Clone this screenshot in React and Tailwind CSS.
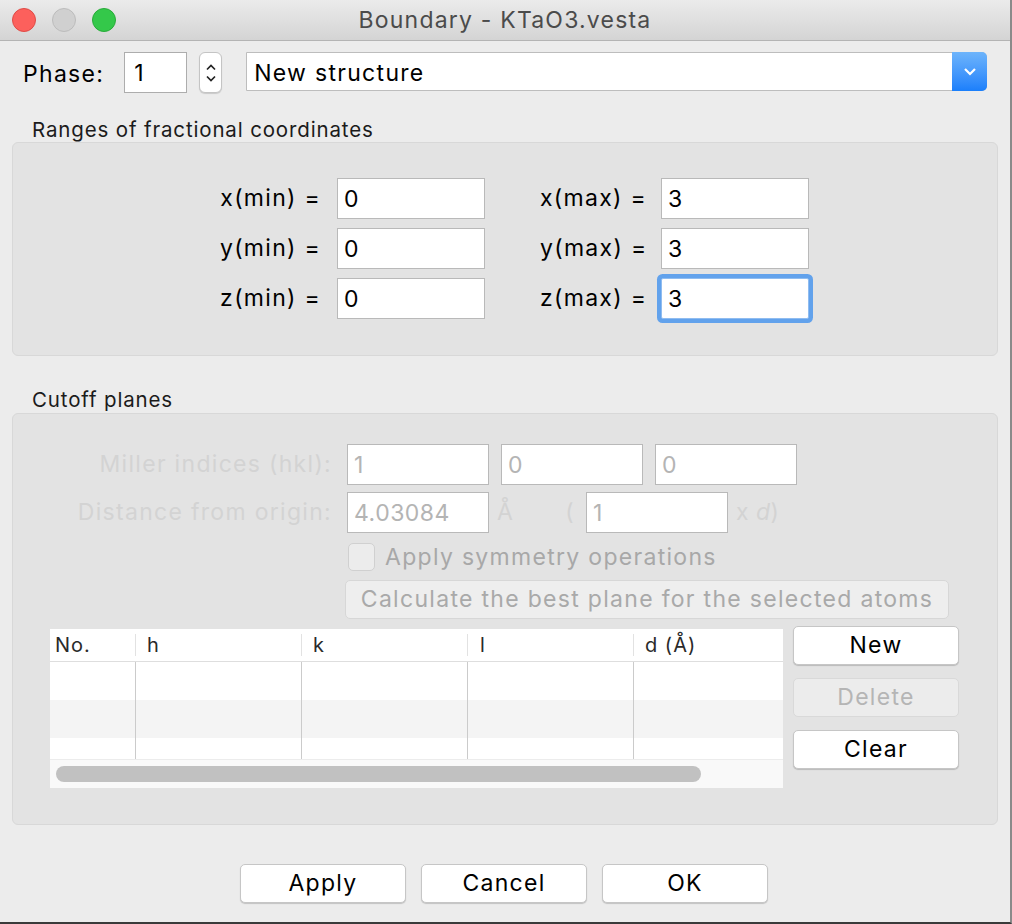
import React from 'react';

const font = { fontFamily: 'Inter, "Liberation Sans", sans-serif' };

function TextBox({ value, w = 'w-[148px]', focused = false, disabled = false }) {
  return (
    <div
      className={`${w} h-[41px] bg-white border ${
        focused ? 'border-[#8fbcf0] shadow-[0_0_0_4px_#62a2ec] rounded-[2px]' : 'border-[#b9b9b9]'
      } flex items-center pl-[6px] pt-[1px] text-[23px] tracking-[0.5px] ${disabled ? 'text-[#b4b4b4]' : 'text-black'}`}
    >
      {value}
    </div>
  );
}

function MacButton({ children, disabled = false, w = 'w-[166px]' }) {
  return (
    <button
      className={`${w} h-[39px] rounded-[5px] border text-[23px] tracking-[1.3px] flex items-center justify-center ${
        disabled
          ? 'bg-[#ececec] border-[#d9d9d9] text-[#b5b5b5]'
          : 'bg-white border-[#c6c6c6] text-black shadow-[0_1px_1px_rgba(0,0,0,0.18)]'
      }`}
    >
      {children}
    </button>
  );
}

function RangeRow({ axis, min, max, focused }) {
  return (
    <div className="flex items-center h-[41px]">
      <div className="w-[308px] text-right text-black whitespace-nowrap">{axis}(min) =</div>
      <div className="ml-[16px]">
        <TextBox value={min} />
      </div>
      <div className="ml-[55px] w-[106px] text-black whitespace-nowrap">{axis}(max) =</div>
      <div className="ml-[15px]">
        <TextBox value={max} focused={focused} />
      </div>
    </div>
  );
}

export default function App() {
  const cols = [
    { label: 'No.', w: 'w-[85px]', pl: 'pl-[5px]' },
    { label: 'h', w: 'w-[166px]', pl: 'pl-[11px]' },
    { label: 'k', w: 'w-[166px]', pl: 'pl-[11px]' },
    { label: 'l', w: 'w-[166px]', pl: 'pl-[12px]' },
    { label: 'd (Å)', w: 'w-[150px]', pl: 'pl-[11px]' },
  ];

  return (
    <div
      style={font}
      className="w-[1012px] h-[924px] bg-[#ececec] flex flex-col border-r-[2px] border-b-[2px] border-r-[#8a8a8a] border-b-[#3a3a3a] overflow-hidden text-[23px] tracking-[1.3px]"
    >
      {/* title bar */}
      <div className="h-[41px] shrink-0 bg-gradient-to-b from-[#ebebeb] to-[#d4d4d4] border-b border-[#b4b4b4] grid grid-cols-[1fr_auto_1fr] items-center">
        <div className="flex items-center gap-[16px] pl-[12px]">
          <span className="w-[24px] h-[24px] rounded-full bg-[#fc605c] border border-[#df4b46]" />
          <span className="w-[24px] h-[24px] rounded-full bg-[#d0d0d0] border border-[#bcbcbc]" />
          <span className="w-[24px] h-[24px] rounded-full bg-[#34c84a] border border-[#28ab39]" />
        </div>
        <div className="text-[23px] tracking-[1.2px] text-[#4b4b4b]">Boundary - KTaO3.vesta</div>
        <div />
      </div>

      <div className="px-[12px]">
        {/* phase row */}
        <div className="flex items-center mt-[11px] h-[41px]">
          <span className="ml-[11px] pt-[3px] text-black">Phase:</span>
          <div className="ml-[20px] w-[63px] h-[41px] bg-white border border-[#adadad] flex items-center pl-[9px] pt-[2px]">
            1
          </div>
          <div className="ml-[12px] w-[23px] h-[41px] bg-white rounded-[6px] border border-[#c4c4c4] shadow-[0_1px_1px_rgba(0,0,0,0.15)] flex flex-col items-center justify-center gap-[4px]">
            <svg width="12" height="8" viewBox="0 0 12 8">
              <path d="M2 6.5 L6 2.5 L10 6.5" stroke="#222" strokeWidth="1.7" fill="none" />
            </svg>
            <svg width="12" height="8" viewBox="0 0 12 8">
              <path d="M2 1.5 L6 5.5 L10 1.5" stroke="#222" strokeWidth="1.7" fill="none" />
            </svg>
          </div>
          <div className="ml-[24px] mr-[11px] flex-1 h-[39px] -mt-[2px] bg-white border border-[#bdbdbd] rounded-r-[5px] flex items-stretch">
            <div className="flex-1 flex items-center pl-[7px] pt-[3px] text-black">New structure</div>
            <div className="w-[35px] -my-[1px] -mr-[1px] rounded-r-[5px] bg-gradient-to-b from-[#6db4fb] to-[#1a7ffb] flex items-center justify-center">
              <svg width="14" height="9" viewBox="0 0 14 9">
                <path d="M2 2 L7 7 L12 2" stroke="#fff" strokeWidth="2.2" fill="none" />
              </svg>
            </div>
          </div>
        </div>

        {/* ranges group */}
        <div className="mt-[25px] ml-[20px] text-[20.5px] tracking-[0.85px] text-[#1b1b1b] leading-[24px]">
          Ranges of fractional coordinates
        </div>
        <div className="h-[214px] bg-[#e3e3e3] border border-[#d8d8d8] rounded-[6px] pt-[35px] flex flex-col gap-[9px]">
          <RangeRow axis="x" min="0" max="3" />
          <RangeRow axis="y" min="0" max="3" />
          <RangeRow axis="z" min="0" max="3" focused />
        </div>

        {/* cutoff group */}
        <div className="mt-[32px] ml-[20px] text-[20.5px] tracking-[0.85px] text-[#1b1b1b] leading-[24px]">Cutoff planes</div>
        <div className="mt-[1px] h-[412px] bg-[#e3e3e3] border border-[#d8d8d8] rounded-[6px] pt-[30px]">
          <div className="flex items-center h-[41px]">
            <div className="w-[319px] text-right text-[#d3d3d3] whitespace-nowrap">Miller indices (hkl):</div>
            <div className="ml-[15px] flex gap-[12px]">
              <TextBox value="1" w="w-[142px]" disabled />
              <TextBox value="0" w="w-[142px]" disabled />
              <TextBox value="0" w="w-[142px]" disabled />
            </div>
          </div>
          <div className="flex items-center h-[41px] mt-[7px]">
            <div className="w-[319px] text-right text-[#d3d3d3] whitespace-nowrap">Distance from origin:</div>
            <div className="ml-[15px]">
              <TextBox value="4.03084" w="w-[142px]" disabled />
            </div>
            <span className="ml-[8px] text-[#d3d3d3]">Å</span>
            <span className="ml-[51px] text-[#d3d3d3]">(</span>
            <div className="ml-[11px]">
              <TextBox value="1" w="w-[142px]" disabled />
            </div>
            <span className="ml-[8px] text-[#d3d3d3] tracking-[0.5px]">
              x <i>d</i>)
            </span>
          </div>
          <div className="flex items-center h-[28px] mt-[10px] ml-[335px]">
            <span className="w-[27px] h-[28px] rounded-[5px] border border-[#d0d0d0] bg-[#ececec]" />
            <span className="ml-[10px] text-[#a8a8a8] whitespace-nowrap">Apply symmetry operations</span>
          </div>
          <div className="mt-[9px] ml-[332px]">
            <div className="w-[604px] h-[39px] rounded-[5px] border border-[#d7d7d7] bg-[#eeeeee] flex items-center justify-center text-[#a9a9a9] whitespace-nowrap">
              Calculate the best plane for the selected atoms
            </div>
          </div>

          {/* table + side buttons */}
          <div className="flex mt-[10px] ml-[37px] gap-[10px]">
            <div className="w-[733px] h-[159px] bg-white flex flex-col overflow-hidden">
              <div className="h-[33px] flex items-center border-b border-[#dedede] shrink-0">
                {cols.map((c, i) => (
                  <div
                    key={c.label}
                    className={`${c.w} shrink-0 h-[22px] flex items-center ${c.pl} text-[20px] tracking-[1px] text-[#2a2a2a] ${
                      i > 0 ? 'border-l border-[#e2e2e2]' : ''
                    }`}
                  >
                    {c.label}
                  </div>
                ))}
              </div>
              {['h-[38px] bg-white', 'h-[38px] bg-[#f4f4f4]', 'h-[21px] bg-white'].map((r, ri) => (
                <div key={ri} className={`${r} flex shrink-0`}>
                  {cols.map((c, i) => (
                    <div key={c.label} className={`${c.w} shrink-0 ${i > 0 ? 'border-l border-[#cbcbcb]' : ''}`} />
                  ))}
                </div>
              ))}
              <div className="flex-1 bg-[#f9f9f9] border-t border-[#ececec] flex items-center pl-[6px]">
                <div className="w-[645px] h-[16px] rounded-full bg-[#c1c1c1]" />
              </div>
            </div>
            <div className="flex flex-col gap-[13px] -mt-[3px]">
              <MacButton>New</MacButton>
              <MacButton disabled>Delete</MacButton>
              <MacButton>Clear</MacButton>
            </div>
          </div>
        </div>

        {/* bottom buttons */}
        <div className="mt-[39px] flex justify-center gap-[15px] pr-[2px]">
          <MacButton>Apply</MacButton>
          <MacButton>Cancel</MacButton>
          <MacButton>OK</MacButton>
        </div>
      </div>
    </div>
  );
}
